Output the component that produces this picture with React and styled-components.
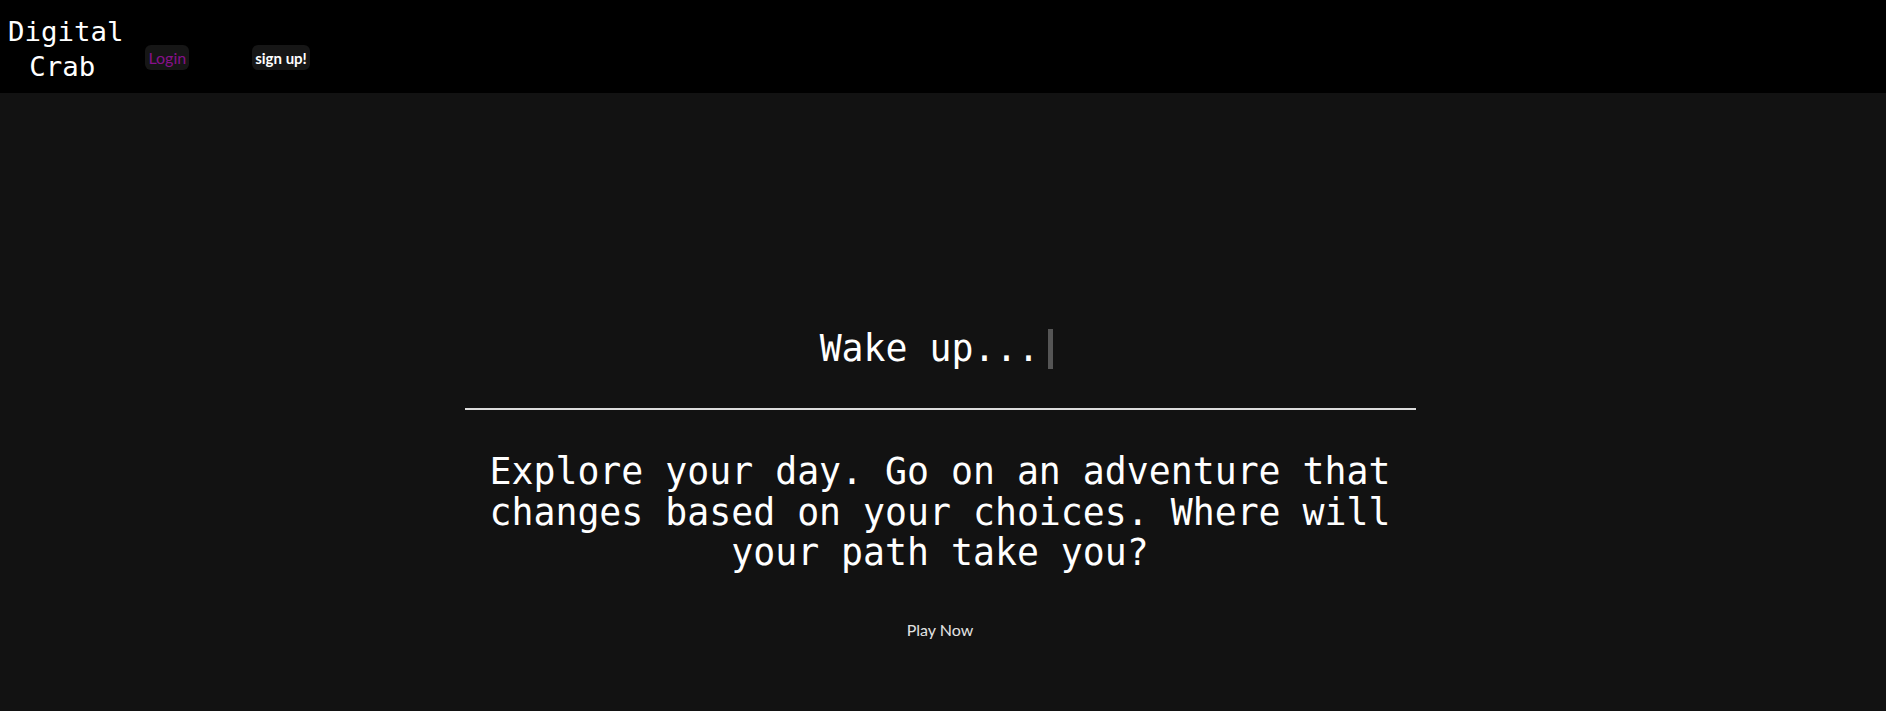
import styled, { createGlobalStyle } from "styled-components";

const Global = createGlobalStyle`
  html, body {
    margin: 0;
    padding: 0;
    background: #121212;
  }
  * { box-sizing: border-box; }
`;

const MONO = `"DejaVu Sans Mono", "Liberation Mono", monospace`;
const SANS = `Lato, "Noto Sans", sans-serif`;

const Page = styled.div`
  min-height: 100vh;
  display: flex;
  flex-direction: column;
  background: #121212;
`;

const NavBar = styled.header`
  height: 93px;
  background: #000;
  display: flex;
  align-items: flex-start;
  padding: 14px 0 0 8px;
`;

const Logo = styled.div`
  font-family: ${MONO};
  font-size: 27.4px;
  line-height: 35px;
  color: #fff;
  text-align: center;
`;

const LogoLine = styled.span`
  margin-right: ${({ $shift }) => $shift || 0}px;
`;

const NavButton = styled.button`
  margin-top: 31px;
  margin-left: ${({ $gap }) => $gap}px;
  height: 25px;
  padding: 0 3px;
  border: none;
  border-radius: 6px;
  background: #161616;
  color: ${({ $color }) => $color};
  font-family: ${SANS};
  font-size: ${({ $size }) => $size}px;
  font-weight: ${({ $bold }) => ($bold ? 700 : 400)};
  cursor: pointer;
`;

const Main = styled.main`
  flex: 1;
  display: flex;
  flex-direction: column;
  align-items: center;
  padding: 236px 6px 0 0;
`;

const Title = styled.h1`
  margin: 0 7px 0 0;
  display: inline-block;
  font-family: ${MONO};
  font-weight: 400;
  font-size: 36.5px;
  line-height: 40px;
  color: #fff;
  white-space: nowrap;
  padding-right: 9px;
  border-right: 5px solid #555;
`;

const Divider = styled.hr`
  width: 951px;
  margin: 39px 0 0;
  border: none;
  border-top: 2px solid #dcdcdc;
`;

const Blurb = styled.p`
  width: 951px;
  margin: 42px 0 0;
  font-family: ${MONO};
  font-size: 36.5px;
  line-height: 40.5px;
  color: #fff;
  text-align: center;
`;

const PlayButton = styled.button`
  margin-top: 46px;
  padding: 0;
  border: none;
  background: none;
  font-family: ${SANS};
  font-size: 16px;
  line-height: 19px;
  color: #e2e2e2;
  cursor: pointer;
`;

export default function App() {
  return (
    <Page>
      <Global />
      <NavBar>
        <Logo>
          Digital
          <br />
          <LogoLine $shift={7}>Crab</LogoLine>
        </Logo>
        <NavButton $gap={22} $size={16} $color="#86118a">Login</NavButton>
        <NavButton $gap={63} $size={15} $color="#fff" $bold>sign up!</NavButton>
      </NavBar>
      <Main>
        <Title>Wake up...</Title>
        <Divider />
        <Blurb>
          Explore your day. Go on an adventure that changes based on your
          choices. Where will your path take you?
        </Blurb>
        <PlayButton>Play Now</PlayButton>
      </Main>
    </Page>
  );
}
